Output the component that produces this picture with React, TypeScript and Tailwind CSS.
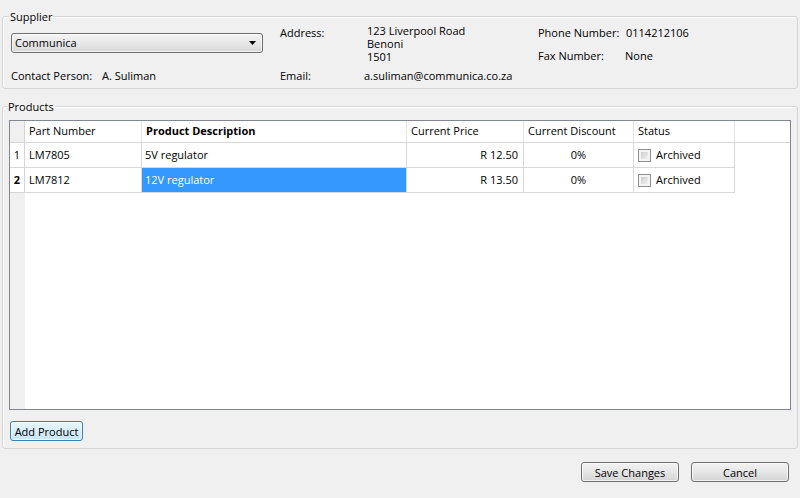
import React from 'react';

type Product = {
  part: string;
  description: string;
  price: string;
  discount: string;
  archived: boolean;
};

const products: Product[] = [
  { part: 'LM7805', description: '5V regulator', price: 'R 12.50', discount: '0%', archived: false },
  { part: 'LM7812', description: '12V regulator', price: 'R 13.50', discount: '0%', archived: false },
];

function Checkbox() {
  return (
    <span className="inline-block w-[13px] h-[13px] border border-[#8e8f8f] bg-[#f4f4f4] p-[2px] box-border">
      <span className="block w-full h-full bg-gradient-to-br from-[#cbcbcb] to-[#f3f3f3]" />
    </span>
  );
}

function WinButton({ children, focused, className }: { children: React.ReactNode; focused?: boolean; className?: string }) {
  return (
    <button
      className={
        'h-[20px] rounded-[3px] border text-[#000] leading-none shadow-[inset_0_0_0_1px_rgba(255,255,255,0.7)] ' +
        (focused
          ? 'border-[#3c7fb1] bg-gradient-to-b from-[#e9f6fd] to-[#c6e6f7] '
          : 'border-[#707070] bg-gradient-to-b from-[#f2f2f2] via-[#e6e6e6] to-[#d4d4d4] ') +
        (className ?? '')
      }
    >
      {children}
    </button>
  );
}

export default function App() {
  return (
    <div
      className="w-[800px] h-[498px] bg-[#f0f0f0] overflow-hidden text-[11px] text-[#000] pt-[9px] px-[2px] flex flex-col"
      style={{ fontFamily: '"Open Sans", "Noto Sans", sans-serif' }}
    >
      {/* Supplier */}
      <fieldset className="border border-[#d5d5d5] rounded-[3px] shadow-[inset_1px_1px_0_#fff] w-[796px] h-[80px]">
        <legend className="ml-[6px] px-[1px] leading-[15px]">Supplier</legend>
        <div className="flex pl-[8px]">
          {/* combo + contact */}
          <div className="w-[269px] flex flex-col pt-[9px]">
            <div className="w-[252px] h-[20px] border border-[#707070] rounded-[3px] bg-gradient-to-b from-[#f4f4f4] via-[#e8e8e8] to-[#d9d9d9] shadow-[inset_0_0_0_1px_rgba(255,255,255,0.6)] flex items-center pl-[3px] pr-[6px]">
              <span className="flex-1">Communica</span>
              <svg width="7" height="4" viewBox="0 0 7 4">
                <path d="M0 0H7L3.5 4Z" fill="#000" />
              </svg>
            </div>
            <div className="flex mt-[15px] leading-[15px]">
              <span className="w-[91px]">Contact Person:</span>
              <span>A. Suliman</span>
            </div>
          </div>
          {/* address + email */}
          <div className="w-[258px] flex flex-col">
            <div className="flex">
              <span className="w-[87px] leading-[15px] pt-[1px]">Address:</span>
              <div className="flex flex-col leading-[13px]">
                <span>123 Liverpool Road</span>
                <span>Benoni</span>
                <span>1501</span>
              </div>
            </div>
            <div className="flex mt-[5px] leading-[15px]">
              <span className="w-[84px]">Email:</span>
              <span>a.suliman@communica.co.za</span>
            </div>
          </div>
          {/* phone + fax */}
          <div className="flex flex-col leading-[15px] pt-[1px]">
            <div className="flex">
              <span className="w-[88px]">Phone Number:</span>
              <span>0114212106</span>
            </div>
            <div className="flex mt-[8px]">
              <span className="w-[87px]">Fax Number:</span>
              <span>None</span>
            </div>
          </div>
        </div>
      </fieldset>

      {/* Products */}
      <fieldset className="mt-[10px] border border-[#d5d5d5] rounded-[3px] shadow-[inset_1px_1px_0_#fff] w-[796px] h-[350px] px-[6px]">
        <legend className="ml-[-2px] px-[1px] leading-[15px]">Products</legend>
        <div className="mt-[6px] w-[782px] h-[290px] border border-[#828790] bg-white flex flex-col">
          {/* header */}
          <div className="flex h-[22px] border-b border-[#d5d5d5] shrink-0">
            <div className="w-[15px] border-r border-[#d5d5d5] bg-[#f0f0f0]" />
            <div className="w-[117px] border-r border-[#e3e3e3] pl-[4px] flex items-center">Part Number</div>
            <div className="w-[265px] border-r border-[#e3e3e3] pl-[4px] flex items-center font-bold">Product Description</div>
            <div className="w-[117px] border-r border-[#e3e3e3] pl-[4px] flex items-center">Current Price</div>
            <div className="w-[110px] border-r border-[#e3e3e3] pl-[4px] flex items-center">Current Discount</div>
            <div className="w-[101px] border-r border-[#e3e3e3] pl-[4px] flex items-center">Status</div>
            <div className="flex-1" />
          </div>
          {/* rows */}
          {products.map((p, i) => {
            const current = i === 1;
            return (
              <div key={p.part} className="flex h-[25px] shrink-0">
                <div
                  className={
                    'w-[15px] border-r border-b border-[#d5d5d5] flex items-center justify-center ' +
                    (current ? 'font-bold' : '')
                  }
                >
                  {i + 1}
                </div>
                <div className="w-[117px] border-r border-b border-[#d8d8d8] pl-[4px] flex items-center">{p.part}</div>
                <div
                  className={
                    'w-[265px] border-r border-b border-[#d8d8d8] pl-[3px] flex items-center ' +
                    (current ? 'bg-[#3399ff] text-white' : '')
                  }
                >
                  {p.description}
                </div>
                <div className="w-[117px] border-r border-b border-[#d8d8d8] pr-[5px] flex items-center justify-end">{p.price}</div>
                <div className="w-[110px] border-r border-b border-[#d8d8d8] flex items-center justify-center">{p.discount}</div>
                <div className="w-[101px] border-r border-b border-[#d8d8d8] pl-[4px] flex items-center gap-[5px]">
                  <Checkbox />
                  <span>Archived</span>
                </div>
              </div>
            );
          })}
          <div className="flex-1 flex">
            <div className="w-[15px] bg-[#f0f0f0]" />
          </div>
        </div>
        <div className="mt-[11px]">
          <WinButton focused className="w-[73px] ml-px">Add Product</WinButton>
        </div>
      </fieldset>

      {/* dialog buttons */}
      <div className="flex justify-end gap-[12px] mt-[13px] pr-[9px]">
        <WinButton className="w-[98px]">Save Changes</WinButton>
        <WinButton className="w-[98px]">Cancel</WinButton>
      </div>
    </div>
  );
}
